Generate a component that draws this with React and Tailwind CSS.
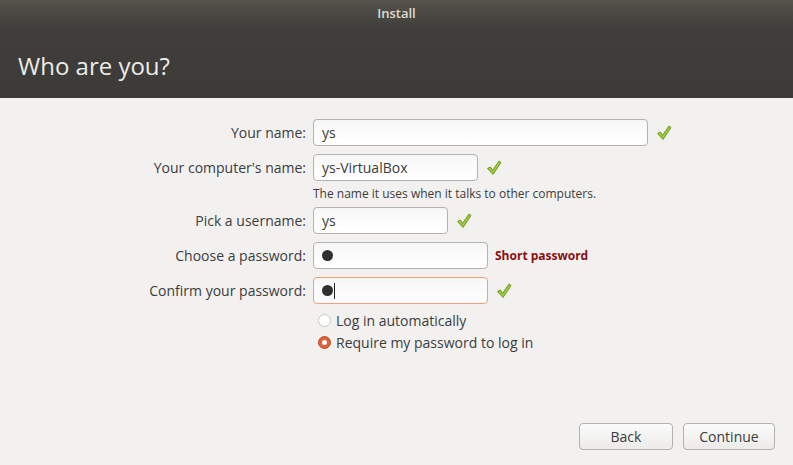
import React from "react";

const Check = () => (
  <svg width="18" height="18" viewBox="0 0 18 18" className="shrink-0">
    <path
      d="M2.5 9.5 L5.5 8 L7.5 11.5 L14 2 L16 3.5 L8 15.5 Z"
      fill="#9ccc3c"
      stroke="#6f9a1e"
      strokeWidth="1"
      strokeLinejoin="round"
    />
  </svg>
);

const Field = ({ value, width, focus, dot, caret }) => (
  <div
    className={`h-[27px] rounded-[4px] border bg-gradient-to-b from-[#f7f7f7] to-[#ffffff] flex items-center px-[8px] text-[14px] text-[#3c3c3c] ${
      focus ? "border-[#f0a080]" : "border-[#b4b2ae]"
    }`}
    style={{ width }}
  >
    {dot ? (
      <span className="w-[11px] h-[11px] rounded-full bg-[#2f2f2f] inline-block" />
    ) : (
      value
    )}
    {caret && <span className="w-px h-[16px] bg-[#222] ml-[1px]" />}
  </div>
);

const Row = ({ label, children }) => (
  <div className="flex items-center h-[27px]">
    <div className="w-[307px] text-right pr-[1px] text-[14px] text-[#3c3c3c]">{label}</div>
    <div className="ml-[6px] flex items-center gap-[7px]">{children}</div>
  </div>
);

export default function App() {
  return (
    <div
      className="w-[793px] h-[465px] bg-[#f2f1f0] flex flex-col overflow-hidden"
      style={{ fontFamily: "'Open Sans', 'Noto Sans', sans-serif" }}
    >
      <div className="h-[98px] bg-gradient-to-b from-[#57534d] via-[#3f3e3a] via-[30%] to-[#3c3b37] shrink-0">
        <div className="h-[28px] flex items-center justify-center text-[13px] font-semibold text-[#dfdbd2]">
          Install
        </div>
        <div className="pl-[18px] pt-[26px] text-[24px] text-[#ecebe8] leading-none">Who are you?</div>
      </div>

      <div className="flex flex-col pt-[21px]">
        <Row label="Your name:">
          <Field value="ys" width={335} />
          <Check />
        </Row>
        <div className="h-[8px]" />
        <Row label="Your computer's name:">
          <Field value="ys-VirtualBox" width={165} />
          <Check />
        </Row>
        <div className="pl-[313px] h-[26px] flex items-center text-[12px] text-[#3c3c3c]">
          The name it uses when it talks to other computers.
        </div>
        <Row label="Pick a username:">
          <Field value="ys" width={135} />
          <Check />
        </Row>
        <div className="h-[8px]" />
        <Row label="Choose a password:">
          <Field dot width={175} />
          <span className="text-[12px] font-bold text-[#8b0f0f]">Short password</span>
        </Row>
        <div className="h-[8px]" />
        <Row label="Confirm your password:">
          <Field dot caret focus width={175} />
          <Check />
        </Row>
        <div className="pl-[318px] pt-[7px] flex flex-col gap-[4px] text-[14px] text-[#3c3c3c]">
          <label className="flex items-center gap-[5px] h-[18px]">
            <span className="w-[13px] h-[13px] rounded-full border border-[#c9c7c3] bg-white" />
            Log in automatically
          </label>
          <label className="flex items-center gap-[5px] h-[18px]">
            <span className="w-[13px] h-[13px] rounded-full bg-[#e0643a] border border-[#c04a22] flex items-center justify-center">
              <span className="w-[5px] h-[5px] rounded-full bg-white" />
            </span>
            Require my password to log in
          </label>
        </div>
      </div>

      <div className="mt-auto mb-[15px] mr-[18px] flex justify-end gap-[10px]">
        <button className="w-[94px] h-[27px] rounded-[4px] border border-[#b4b2ae] bg-gradient-to-b from-[#fbfbfb] to-[#ecebe9] text-[14px] text-[#3c3c3c]">
          Back
        </button>
        <button className="w-[92px] h-[27px] rounded-[4px] border border-[#b4b2ae] bg-gradient-to-b from-[#fbfbfb] to-[#ecebe9] text-[14px] text-[#3c3c3c]">
          Continue
        </button>
      </div>
    </div>
  );
}
